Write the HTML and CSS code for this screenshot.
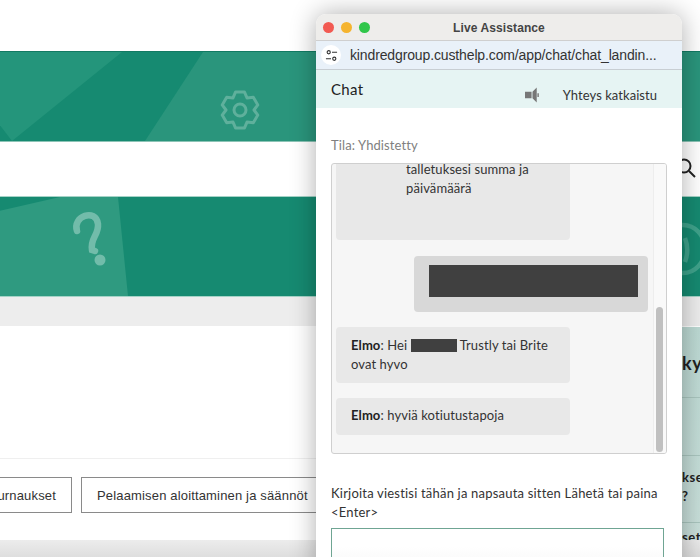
FILE: index.html
```html
<!DOCTYPE html>
<html lang="fi">
<head>
<meta charset="utf-8">
<title>Live Assistance</title>
<link rel="stylesheet" href="styles.css">
</head>
<body>
<div class="page">
  <div class="top-gap"></div>
  <div class="band band-one">
    <svg class="bg-art" viewBox="0 0 700 91" preserveAspectRatio="none" aria-hidden="true">
      <polygon points="0,0 122,0 12,91 0,75" fill="#24957b"/>
      <polygon points="145,91 203,0 700,0 700,91" fill="#2a957c"/>
    </svg>
    <svg class="gear" viewBox="0 0 40 40" aria-hidden="true">
      <path d="M15.5 2.05L24.5 2.05L27 7.9L33.3 7.15L37.8 14.9L34 20L37.8 25.1L33.3 32.85L27 32.1L24.5 37.95L15.5 37.95L13 32.1L6.7 32.85L2.2 25.1L6 20L2.2 14.9L6.7 7.15L13 7.9Z"/>
      <circle cx="20" cy="20" r="6"/>
    </svg>
  </div>
  <div class="search-row">
    <svg class="search" viewBox="0 0 20 20" aria-hidden="true"><circle cx="8" cy="8" r="6.5"/><path d="M13 13l6 6"/></svg>
  </div>
  <div class="band band-two">
    <svg class="bg-art" viewBox="0 0 700 101" preserveAspectRatio="none" aria-hidden="true">
      <polygon points="0,14 60,0 118,0 128,101 0,101" fill="#2f9a80"/>
    </svg>
    <svg class="question" viewBox="0 0 40 60" aria-hidden="true">
      <path d="M7 21C2 6 26 -2 28 14C29 25 20 28 22 40L25 41"/>
      <circle cx="30" cy="50" r="5.5"/>
    </svg>
    <svg class="ring" viewBox="0 0 24 68" aria-hidden="true">
      <ellipse cx="7" cy="34" rx="22" ry="24"/>
      <path d="M9 23c3 8 3 16 0 24"/>
    </svg>
  </div>
  <div class="grey-strip"></div>
  <div class="content">
    <div class="side-panel">
      <div class="side-item side-title">kys</div>
      <div class="side-item side-empty"></div>
      <div class="side-item side-text">kse<br>?</div>
      <div class="side-item side-last">set</div>
    </div>
    <div class="tabs">
      <span class="tab tab-cut">Turnaukset</span>
      <span class="tab">Pelaamisen aloittaminen ja säännöt</span>
    </div>
  </div>
  <div class="bottom-strip"></div>
</div>

<section class="window">
  <header class="titlebar">
    <span class="dot dot-red"></span><span class="dot dot-yellow"></span><span class="dot dot-green"></span>
    <span class="title">Live Assistance</span>
  </header>
  <div class="urlbar">
    <span class="url-icon">
      <svg viewBox="0 0 14 14" aria-hidden="true"><circle cx="4" cy="3.5" r="1.7"/><path d="M7.5 3.5H13M1 10.5h5.5"/><circle cx="10" cy="10.5" r="1.7"/></svg>
    </span>
    <span class="url">kindredgroup.custhelp.com/app/chat/chat_landin...</span>
  </div>
  <div class="chat-head">
    <span class="chat-title">Chat</span>
    <svg class="speaker" viewBox="0 0 16 16" aria-hidden="true"><path d="M0 4.5h7v7H0zM8 4.5L12.5 0v16L8 11.5z"/><path d="M14 6v4" class="speaker-wave"/></svg>
    <span class="chat-status">Yhteys katkaistu</span>
  </div>
  <div class="chat-body">
    <p class="state">Tila: Yhdistetty</p>
    <div class="log">
      <div class="log-inner">
        <div class="msg msg-first">talletuksesi summa ja<br>päivämäärä</div>
        <div class="msg-mine"><span class="redact-big"></span></div>
        <div class="msg msg-two"><b>Elmo</b>: Hei <span class="redact-small"></span> Trustly tai Brite<br>ovat hyvo</div>
        <div class="msg msg-three"><b>Elmo</b>: hyviä kotiutustapoja</div>
      </div>
      <div class="scroll-track"><span class="scroll-thumb"></span></div>
    </div>
    <p class="prompt">Kirjoita viestisi tähän ja napsauta sitten Lähetä tai paina &lt;Enter&gt;</p>
    <div class="input"></div>
  </div>
</section>
</body>
</html>
```

FILE: styles.css
```css
* { box-sizing: border-box; }
html, body { margin: 0; height: 100%; overflow: hidden; background: #fff; }
body { position: relative; width: 700px; height: 557px; font-family: "Lato", "Liberation Sans", sans-serif; color: #333; }

.page { display: flex; flex-direction: column; height: 557px; overflow: hidden; }
.top-gap { height: 51px; flex: none; }
.band { position: relative; flex: none; overflow: hidden; background: #168a71; }
.band-one { height: 91px; border-top: 1px solid #127a63; border-bottom: 1px solid #8cc4b6; }
.band-two { height: 101px; border-top: 1px solid #a5d3c7; border-bottom: 1px solid #a5d3c7; }
.bg-art { position: absolute; inset: 0; width: 100%; height: 100%; }
.gear { position: absolute; left: 220px; top: 38px; width: 40px; height: 40px; fill: none; stroke: #5fb09c; stroke-width: 3; stroke-linejoin: round; }
.search-row { height: 54px; flex: none; display: flex; justify-content: flex-end; padding: 16px 4px 0 0; }
.search { width: 20px; height: 20px; fill: none; stroke: #222; stroke-width: 2; }
.question { position: absolute; left: 70px; top: 13px; width: 40px; height: 60px; fill: #72bcaa; stroke: none; overflow: visible; }
.question path { fill: none; stroke: #72bcaa; stroke-width: 6.5; stroke-linecap: round; }
.ring { position: absolute; left: 676px; top: 18px; width: 24px; height: 68px; fill: none; stroke: #3fa28b; stroke-width: 4.5; }
.grey-strip { height: 29px; flex: none; background: #ededed; }
.content { position: relative; flex: 1; display: flex; flex-direction: column; justify-content: flex-end; padding-bottom: 27px; }
.tabs { display: flex; gap: 9px; margin-left: -22px; padding-top: 18px; border-top: 1px solid #efefef; }
.tab { height: 36px; flex: none; padding: 0 15px; display: flex; align-items: center; border: 1px solid #8a8a8a; font: 13px "Liberation Sans", sans-serif; letter-spacing: .16px; color: #333; white-space: nowrap; }
.tab-cut { width: 94px; justify-content: flex-end; }
.tab:last-child { padding-right: 40px; }
.side-panel { position: absolute; left: 682px; top: 1px; width: 18px; bottom: 0; background: linear-gradient(#bcd9d3, #c9dfda); color: #222; overflow: hidden; }
.side-item { border-bottom: 1px solid #a9c5be; font-size: 13px; font-weight: 700; letter-spacing: .6px; line-height: 19px; white-space: nowrap; }
.side-title { height: 71px; padding-top: 25px; font-size: 18px; line-height: 22px; }
.side-empty { height: 58px; }
.side-text { height: 67px; padding-top: 12px; }
.side-last { height: 40px; padding-top: 5px; border-bottom: 0; }
.bottom-strip { height: 17px; flex: none; background: linear-gradient(#ececec, #dedede); }

.window { position: absolute; left: 316px; top: 14px; width: 366px; height: 560px; display: flex; flex-direction: column; border-radius: 10px 10px 0 0; background: #fff; box-shadow: 0 0 26px rgba(0,0,0,.32); overflow: hidden; }
.titlebar { height: 27px; flex: none; display: flex; align-items: center; gap: 7px; padding: 1px 0 0 7px; position: relative; background: #eeedeb; border-bottom: 1px solid #cfcfcf; }
.dot { width: 11px; height: 11px; border-radius: 50%; }
.dot-red { background: #f25a52; }
.dot-yellow { background: #f5b42f; }
.dot-green { background: #30c64a; }
.title { position: absolute; left: 0; right: 0; text-align: center; font: 700 12px "Liberation Sans", sans-serif; letter-spacing: .1px; color: #444; }
.urlbar { height: 29px; flex: none; display: flex; align-items: center; gap: 9px; padding-left: 5px; background: #e9f1f9; border-bottom: 1px solid #c8ced3; }
.url-icon { width: 20px; height: 20px; flex: none; display: flex; align-items: center; justify-content: center; border-radius: 50%; background: #fff; }
.url-icon svg { width: 13px; height: 13px; fill: none; stroke: #333; stroke-width: 1.2; }
.url { font: 14px "Liberation Sans", sans-serif; letter-spacing: -.13px; color: #333; white-space: nowrap; }
.chat-head { height: 38px; flex: none; display: flex; background: #e6f4f3; padding: 0 25px 0 15px; position: relative; }
.chat-title { font-size: 15px; letter-spacing: .3px; margin-top: 10px; color: #222; }
.speaker { position: absolute; left: 209px; top: 17px; width: 15px; height: 16px; fill: #777; }
.speaker-wave { fill: none; stroke: #777; stroke-width: 1.5; }
.chat-status { margin-left: auto; margin-top: 17px; font-size: 13px; letter-spacing: .05px; color: #333; }
.chat-body { flex: 1; padding: 29px 15px 0; display: flex; flex-direction: column; }
.state { margin: 0 0 9px; font-size: 13px; line-height: 17px; letter-spacing: .1px; color: #808080; }
.log { height: 291px; flex: none; position: relative; overflow: hidden; background: #f6f6f6; border: 1px solid #cfcfcf; border-radius: 3px; }
.log-inner { display: flex; flex-direction: column; padding: 0 4px; margin-top: -4px; }
.msg { width: 234px; padding: 0 15px; border-radius: 4px; background: #e8e8e8; font-size: 13px; line-height: 19px; letter-spacing: .1px; color: #333; white-space: nowrap; }
.msg b { color: #222; }
.msg-first { height: 80px; padding-left: 70px; }
.msg-mine { width: 234px; height: 56px; margin: 16px 14px 15px auto; display: flex; align-items: flex-start; justify-content: flex-end; padding: 9px 10px 0 0; border-radius: 4px; background: #d8d8d8; }
.redact-big { width: 209px; height: 32px; background: #404040; }
.msg-two { height: 56px; padding-top: 9px; }
.msg-three { height: 37px; margin-top: 15px; padding-top: 8px; }
.redact-small { display: inline-block; width: 46px; height: 13px; background: #404040; vertical-align: -2px; }
.scroll-track { position: absolute; right: 0; top: 0; bottom: 0; width: 13px; background: #f9f9f9; border-left: 1px solid #ededed; }
.scroll-thumb { position: absolute; left: 2px; top: 143px; width: 7px; height: 145px; border-radius: 4px; background: #c0c0c0; }
.prompt { margin: 30px 0 6px; font-size: 13px; line-height: 19px; letter-spacing: .2px; color: #333; }
.input { height: 60px; flex: none; width: 333px; border: 1px solid #6fa593; background: linear-gradient(#fff 30%, #f0f0f0); }
```
